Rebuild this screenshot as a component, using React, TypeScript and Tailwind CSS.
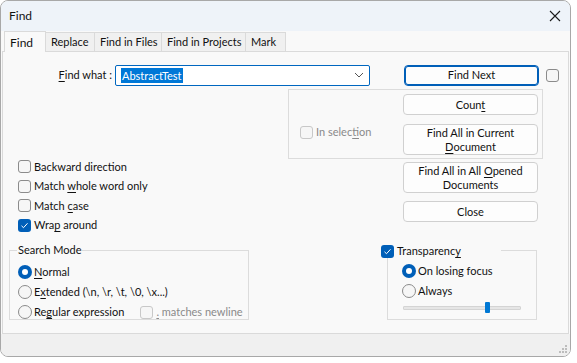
import type { ReactNode } from "react";

const font = { fontFamily: 'Lato, "Noto Sans", sans-serif' };

function U({ children }: { children: ReactNode }) {
  return <span className="underline underline-offset-2">{children}</span>;
}

function Check({ checked, disabled }: { checked?: boolean; disabled?: boolean }) {
  if (checked) {
    return (
      <span className="flex h-[13px] w-[13px] shrink-0 items-center justify-center rounded-[3px] bg-[#005fb8]">
        <svg width="9" height="9" viewBox="0 0 9 9" fill="none">
          <path d="M1.5 4.8 3.5 6.7 7.5 2.3" stroke="white" strokeWidth="1" />
        </svg>
      </span>
    );
  }
  return (
    <span
      className={`block h-[13px] w-[13px] shrink-0 rounded-[3px] border bg-[#f6f6f6] ${
        disabled ? "border-[#c8c8c8]" : "border-[#8b8b8b]"
      }`}
    />
  );
}

function Radio({ on }: { on?: boolean }) {
  if (on) {
    return (
      <span className="flex h-[14px] w-[14px] shrink-0 items-center justify-center rounded-full bg-[#005fb8]">
        <span className="h-[6px] w-[6px] rounded-full bg-white" />
      </span>
    );
  }
  return <span className="block h-[14px] w-[14px] shrink-0 rounded-full border border-[#8b8b8b] bg-[#f6f6f6]" />;
}

function Btn({ children, tall, primary }: { children: ReactNode; tall?: boolean; primary?: boolean }) {
  return (
    <div
      className={`flex w-[135px] shrink-0 items-center justify-center rounded-[4px] bg-[#fdfdfd] text-center leading-[14px] text-[#111] ${
        tall ? "h-[31px]" : "h-[21px]"
      } ${primary ? "border border-[#005fb8] shadow-[inset_0_0_0_1px_#005fb8]" : "border border-[#d0d0d0]"}`}
    >
      <span>{children}</span>
    </div>
  );
}

function CheckRow({ checked, children }: { checked?: boolean; children: ReactNode }) {
  return (
    <div className="flex h-[19.5px] items-center gap-[3px] whitespace-nowrap">
      <Check checked={checked} />
      <span>{children}</span>
    </div>
  );
}

function RadioRow({ on, children }: { on?: boolean; children: ReactNode }) {
  return (
    <div className="flex h-[20px] items-center gap-[2px] whitespace-nowrap">
      <Radio on={on} />
      <span>{children}</span>
    </div>
  );
}

function Tab({ w, children }: { w: string; children: ReactNode }) {
  return (
    <div className={`flex h-[19px] shrink-0 items-center whitespace-nowrap border-t border-r border-[#dadada] bg-[#f0f0f0] pl-[5px] ${w}`}>
      {children}
    </div>
  );
}

export default function App() {
  return (
    <div className="h-[363px] w-[577px] overflow-hidden bg-white text-[11px] text-[#111]" style={font}>
      <div className="flex h-[357px] w-[571px] flex-col overflow-hidden rounded-[8px] border border-[#a8a8a8] bg-[#f9f9f9]">
        {/* title bar */}
        <div className="flex h-[30px] shrink-0 items-center justify-between bg-[#eef3f9] pl-[8px] pr-[9px]">
          <span className="text-[12px]">Find</span>
          <svg width="12" height="12" viewBox="0 0 12 12">
            <path d="M1 1 11 11M11 1 1 11" stroke="#1b1b1b" strokeWidth="1.1" />
          </svg>
        </div>

        {/* tabs */}
        <div className="flex h-[20px] shrink-0 items-end pl-[3px]">
          <div className="relative z-10 -mb-px flex h-[21px] w-[42px] shrink-0 items-start border border-b-0 border-[#dadada] bg-[#f9f9f9] pl-[5px] pt-[2px] text-[12px]">
            Find
          </div>
          <Tab w="w-[49px]">Replace</Tab>
          <Tab w="w-[67px]">Find in Files</Tab>
          <Tab w="w-[84px]">Find in Projects</Tab>
          <Tab w="w-[40px]">Mark</Tab>
        </div>

        {/* panel */}
        <div className="ml-px mr-px flex h-[283px] shrink-0 flex-col border border-[#dadada] bg-[#f9f9f9]">
          {/* row A */}
          <div className="mt-[12px] flex h-[22px] items-center">
            <div className="w-[109px] shrink-0 whitespace-nowrap text-right">
              <U>F</U>ind what :
            </div>
            <div className="ml-[3px] flex h-[21px] w-[255px] shrink-0 items-center justify-between rounded-[2px] border border-[#0067c0] bg-white pl-[5px] pr-[5px]">
              <span className="bg-[#0078d7] px-px leading-[15px] text-white">AbstractTest</span>
              <svg width="10" height="6" viewBox="0 0 10 6">
                <path d="M1 1 5 5 9 1" stroke="#555" fill="none" strokeWidth="1" />
              </svg>
            </div>
            <div className="ml-[34px] shrink-0">
              <Btn primary>Find Next</Btn>
            </div>
            <div className="ml-[7px] shrink-0">
              <Check />
            </div>
          </div>

          {/* row B: in selection group */}
          <div className="ml-[285px] mt-[3px] flex h-[70px] w-[255px] border border-[#dcdcdc]">
            <div className="flex w-[114px] shrink-0 items-center gap-[3px] whitespace-nowrap pl-[11px] pt-[16px] text-[#8a8a8a]">
              <Check disabled />
              <span>
                In selec<U>t</U>ion
              </span>
            </div>
            <div className="flex flex-col gap-[9px] pt-[4px]">
              <Btn>
                Coun<U>t</U>
              </Btn>
              <Btn tall>
                Find All in Current
                <br />
                <U>D</U>ocument
              </Btn>
            </div>
          </div>

          {/* row C */}
          <div className="-mt-[2px] flex">
            <div className="ml-[15px] flex w-[385px] shrink-0 flex-col">
              <CheckRow>Backward direction</CheckRow>
              <CheckRow>
                Match <U>w</U>hole word only
              </CheckRow>
              <CheckRow>
                Match <U>c</U>ase
              </CheckRow>
              <CheckRow checked>
                Wra<U>p</U> around
              </CheckRow>
            </div>
            <div className="mt-[5px] flex flex-col gap-[8px]">
              <Btn tall>
                Find All in All <U>O</U>pened
                <br />
                Documents
              </Btn>
              <Btn>Close</Btn>
            </div>
          </div>

          {/* row D */}
          <div className="mt-[7px] flex items-start">
            <div className="ml-[6px] mt-[8px] h-[70px] w-[240px] shrink-0 border border-[#dcdcdc] pl-[7px]">
              <div className="-mt-[8px] w-fit whitespace-nowrap bg-[#f9f9f9] px-px leading-[14px]">Search Mode</div>
              <div className="mt-[5px] flex flex-col pl-px">
                <RadioRow on>
                  <U>N</U>ormal
                </RadioRow>
                <RadioRow>
                  E<U>x</U>tended (\n, \r, \t, \0, \x...)
                </RadioRow>
                <div className="flex items-center">
                  <RadioRow>
                    Re<U>g</U>ular expression
                  </RadioRow>
                  <div className="ml-[16px] flex items-center gap-[3px] whitespace-nowrap text-[#8a8a8a]">
                    <Check disabled />
                    <span>
                      <U>.</U> matches newline
                    </span>
                  </div>
                </div>
              </div>
            </div>

            <div className="ml-[132px] mt-[3px] flex shrink-0 flex-col">
              <div className="relative z-10 flex h-[13px] w-[120px] items-center gap-[3px] whitespace-nowrap bg-[#f9f9f9]">
                <Check checked />
                <span>
                  Transparenc<U>y</U>
                </span>
              </div>
              <div className="-mt-[8px] ml-[6px] h-[70px] w-[150px] border border-[#dcdcdc] pl-[14px] pt-[10px]">
                <RadioRow on>On losing focus</RadioRow>
                <RadioRow>Always</RadioRow>
                <div className="relative ml-px mt-[5px] h-[4px] w-[118px] rounded-[1px] border border-[#d4d4d4] bg-[#e6e6e6]">
                  <div className="absolute -top-[5px] left-[81px] h-[11px] w-[5px] rounded-[1px] bg-[#0078d4]" />
                </div>
              </div>
            </div>
          </div>
        </div>

        {/* status bar */}
        <div className="flex flex-1 items-end justify-end bg-[#f0f0f0] pb-[2px] pr-[2px]">
          <svg width="10" height="10" viewBox="0 0 10 10" fill="#bdbdbd">
            <rect x="7" y="1" width="2" height="2" />
            <rect x="4" y="4" width="2" height="2" />
            <rect x="7" y="4" width="2" height="2" />
            <rect x="1" y="7" width="2" height="2" />
            <rect x="4" y="7" width="2" height="2" />
            <rect x="7" y="7" width="2" height="2" />
          </svg>
        </div>
      </div>
    </div>
  );
}
